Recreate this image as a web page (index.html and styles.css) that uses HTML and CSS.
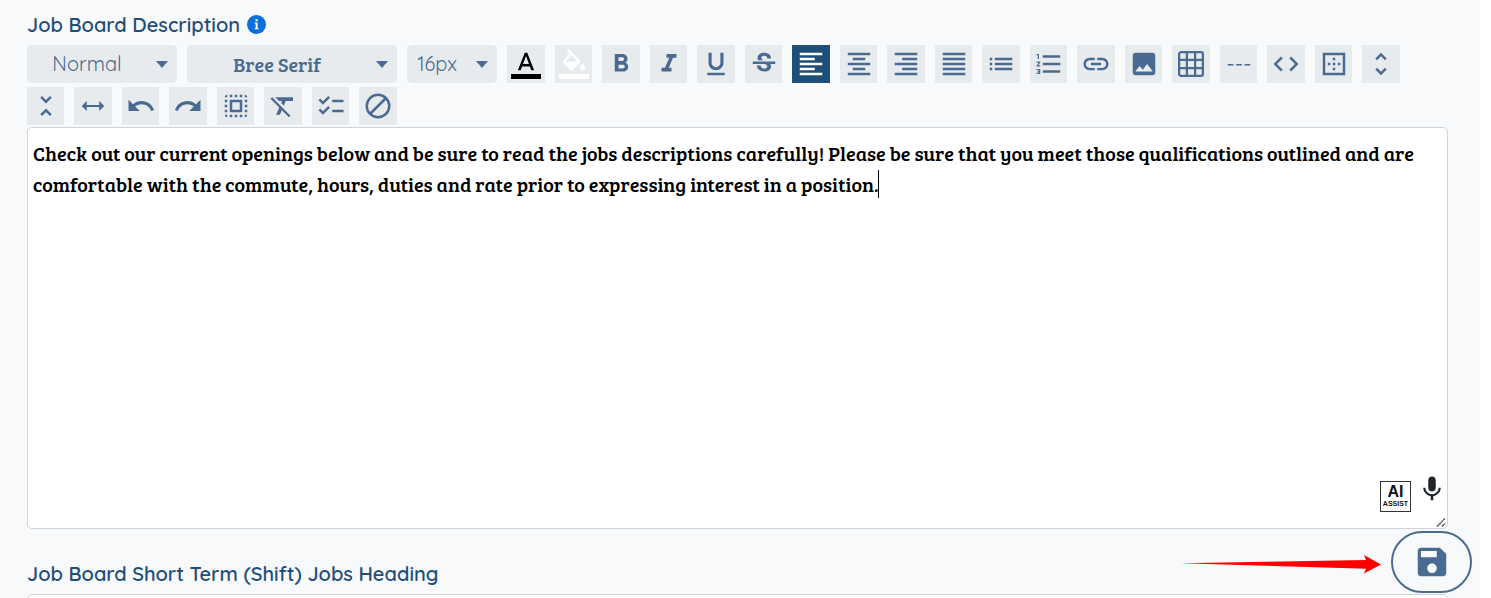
FILE: index.html
```html
<!DOCTYPE html>
<html lang="en">
<head>
  <meta charset="UTF-8">
  <meta name="viewport" content="width=device-width, initial-scale=1.0">
  <title>Job Board Settings</title>
  <link rel="stylesheet" href="styles.css">
</head>
<body>
  <main class="panel">
    <div class="field-label" id="description-label">
      Job Board Description
      <svg viewBox="0 0 20 20" class="info-icon" aria-hidden="true">
        <circle cx="10" cy="10" r="10" fill="#0b6fdc"/>
        <path d="M9 4.5h2.2v2.2H9zM8.2 8h3v5.8h.9V15H8.2v-1.2h.9V9.3h-.9z" fill="#fff"/>
      </svg>
    </div>

    <!-- Toolbar -->
    <div class="toolbar" role="toolbar" aria-label="Text formatting">
      <span class="picker picker-format">
        <select aria-label="Paragraph format"><option>Normal</option><option>Heading 1</option><option>Heading 2</option></select>
      </span>
      <span class="picker picker-font">
        <select aria-label="Font"><option>Bree Serif</option><option>Quicksand</option></select>
      </span>
      <span class="picker picker-size">
        <select aria-label="Font size"><option>16px</option><option>18px</option><option>20px</option></select>
      </span>
      <button type="button" class="tool tool-color" aria-label="Text color"><svg viewBox="0 0 24 24"><path d="M11 3 5.5 17h2.25l1.12-3h6.25l1.12 3h2.25L13 3zm-1.38 9L12 5.67 14.38 12zM0 20h24v4H0z"/></svg></button>
      <button type="button" class="tool tool-fill" aria-label="Background color"><svg viewBox="0 0 24 24"><path d="M16.56 8.94 7.62 0 6.21 1.41l2.38 2.38-5.15 5.15a1.49 1.49 0 0 0 0 2.12l5.5 5.5c.29.29.68.44 1.06.44s.77-.15 1.06-.44l5.5-5.5c.59-.58.59-1.53 0-2.12zM5.21 10 10 5.21 14.79 10zM19 11.5s-2 2.17-2 3.5c0 1.1.9 2 2 2s2-.9 2-2c0-1.33-2-3.5-2-3.5zM0 20h24v4H0z"/></svg></button>
      <button type="button" class="tool" aria-label="Bold"><svg viewBox="0 0 24 24"><path d="M15.6 10.79c.97-.67 1.65-1.77 1.65-2.79 0-2.26-1.75-4-4-4H7v14h7.04c2.09 0 3.71-1.7 3.71-3.79 0-1.52-.86-2.82-2.15-3.42zM10 6.5h3c.83 0 1.5.67 1.5 1.5s-.67 1.5-1.5 1.5h-3zm3.5 9H10v-3h3.5c.83 0 1.5.67 1.5 1.5s-.67 1.5-1.5 1.5z"/></svg></button>
      <button type="button" class="tool" aria-label="Italic"><svg viewBox="0 0 24 24"><path d="M10 4v3h2.21l-3.42 8H6v3h8v-3h-2.21l3.42-8H18V4z"/></svg></button>
      <button type="button" class="tool" aria-label="Underline"><svg viewBox="0 0 24 24"><path d="M12 17c3.31 0 6-2.69 6-6V3h-2.5v8c0 1.93-1.57 3.5-3.5 3.5S8.5 12.93 8.5 11V3H6v8c0 3.31 2.69 6 6 6zm-7 2v2h14v-2z"/></svg></button>
      <button type="button" class="tool" aria-label="Strikethrough"><svg viewBox="0 0 24 24"><path d="M7.24 8.75c-.26-.48-.39-1.03-.39-1.67 0-.61.13-1.16.4-1.67.26-.5.63-.93 1.11-1.29a5.73 5.73 0 0 1 1.7-.83c.66-.19 1.39-.29 2.18-.29.81 0 1.54.11 2.21.34.66.22 1.23.54 1.69.94.47.4.83.88 1.08 1.43s.38 1.15.38 1.81h-3.01c0-.31-.05-.59-.15-.85-.09-.27-.24-.49-.44-.68-.2-.19-.45-.33-.75-.44-.3-.1-.66-.16-1.06-.16-.39 0-.74.04-1.03.13s-.53.21-.72.36c-.19.16-.34.34-.44.55-.1.21-.15.43-.15.66 0 .48.25.88.74 1.21.38.25.77.48 1.41.7H7.39c-.05-.08-.11-.17-.15-.25zM21 12v-2H3v2h9.62c.18.07.4.14.55.2.37.17.66.34.87.51s.35.36.43.57c.07.2.11.43.11.69 0 .23-.05.45-.14.66-.09.2-.23.38-.42.53-.19.15-.42.26-.71.35-.29.08-.63.13-1.01.13-.43 0-.83-.04-1.18-.13s-.66-.23-.91-.42c-.25-.19-.45-.44-.59-.75s-.25-.76-.25-1.21H6.4c0 .55.08 1.13.24 1.58s.37.85.65 1.21c.28.35.6.66.98.92.37.26.78.48 1.22.65.44.17.9.3 1.38.39.48.08.96.13 1.44.13.8 0 1.53-.09 2.18-.28s1.21-.45 1.67-.79c.46-.34.82-.77 1.07-1.27s.38-1.07.38-1.71c0-.6-.1-1.14-.31-1.61-.05-.11-.11-.23-.17-.33H21z"/></svg></button>
      <button type="button" class="tool active" aria-label="Align left" aria-pressed="true"><svg viewBox="0 0 24 24"><path d="M3 3h18v2H3zM3 7h12v2H3zM3 11h18v2H3zM3 15h12v2H3zM3 19h18v2H3z"/></svg></button>
      <button type="button" class="tool" aria-label="Align center"><svg viewBox="0 0 24 24"><path d="M3 3h18v2H3zM7 7h10v2H7zM3 11h18v2H3zM7 15h10v2H7zM3 19h18v2H3z"/></svg></button>
      <button type="button" class="tool" aria-label="Align right"><svg viewBox="0 0 24 24"><path d="M3 3h18v2H3zM9 7h12v2H9zM3 11h18v2H3zM9 15h12v2H9zM3 19h18v2H3z"/></svg></button>
      <button type="button" class="tool" aria-label="Justify"><svg viewBox="0 0 24 24"><path d="M3 3h18v2H3zM3 7h18v2H3zM3 11h18v2H3zM3 15h18v2H3zM3 19h18v2H3z"/></svg></button>
      <button type="button" class="tool" aria-label="Bulleted list"><svg viewBox="0 0 24 24"><path d="M3 13h2v-2H3zm0 4h2v-2H3zm0-8h2V7H3zm4 4h14v-2H7zm0 4h14v-2H7zM7 7v2h14V7z"/></svg></button>
      <button type="button" class="tool" aria-label="Numbered list"><svg viewBox="0 0 24 24"><path d="M2 17h2v.5H3v1h1v.5H2v1h3v-4H2zm1-9h1V4H2v1h1zm-1 3h1.8L2 13.1v.9h3v-1H3.2L5 10.9V10H2zm5-6v2h14V5zm0 14h14v-2H7zm0-6h14v-2H7z"/></svg></button>
      <button type="button" class="tool" aria-label="Insert link"><svg viewBox="0 0 24 24"><path d="M3.9 12c0-1.71 1.39-3.1 3.1-3.1h4V7H7c-2.76 0-5 2.24-5 5s2.24 5 5 5h4v-1.9H7c-1.71 0-3.1-1.39-3.1-3.1zM8 13h8v-2H8zm9-6h-4v1.9h4c1.71 0 3.1 1.39 3.1 3.1s-1.39 3.1-3.1 3.1h-4V17h4c2.76 0 5-2.24 5-5s-2.24-5-5-5z"/></svg></button>
      <button type="button" class="tool" aria-label="Insert image"><svg viewBox="0 0 24 24"><path d="M21 19V5c0-1.1-.9-2-2-2H5c-1.1 0-2 .9-2 2v14c0 1.1.9 2 2 2h14c1.1 0 2-.9 2-2zM8.5 13.5l2.5 3.01L14.5 12l4.5 6H5z"/></svg></button>
      <button type="button" class="tool" aria-label="Insert table"><svg viewBox="0 0 24 24"><path d="M4 2.5h16a1.5 1.5 0 0 1 1.5 1.5v16a1.5 1.5 0 0 1-1.5 1.5H4A1.5 1.5 0 0 1 2.5 20V4A1.5 1.5 0 0 1 4 2.5zM2.5 8.7h19M2.5 15.3h19M8.7 2.5v19M15.3 2.5v19" fill="none" stroke="currentColor" stroke-width="1.8"/></svg></button>
      <button type="button" class="tool" aria-label="Horizontal line"><svg viewBox="0 0 24 24"><path d="M3 12.5h4.6M9.7 12.5h4.6M16.4 12.5H21" fill="none" stroke="currentColor" stroke-width="1.2"/></svg></button>
      <button type="button" class="tool" aria-label="Source code"><svg viewBox="0 0 24 24"><path d="M9.4 16.6 4.8 12l4.6-4.6L8 6l-6 6 6 6zm5.2 0 4.6-4.6-4.6-4.6L16 6l6 6-6 6z"/></svg></button>
      <button type="button" class="tool" aria-label="Show borders"><svg viewBox="0 0 24 24"><path d="M13 7h-2v2h2zm0 4h-2v2h2zm4 0h-2v2h2zM3 3v18h18V3zm16 16H5V5h14zm-6-4h-2v2h2zm-4-4H7v2h2z"/></svg></button>
      <button type="button" class="tool" aria-label="Increase height"><svg viewBox="0 0 24 24"><path d="M12 5.83 15.17 9l1.41-1.41L12 3 7.41 7.59 8.83 9zm0 12.34L8.83 15l-1.41 1.41L12 21l4.59-4.59L15.17 15z"/></svg></button>
      <button type="button" class="tool" aria-label="Decrease height"><svg viewBox="0 0 24 24"><path d="M7.41 18.59 8.83 20 12 16.83 15.17 20l1.41-1.41L12 14zm9.18-13.18L15.17 4 12 7.17 8.83 4 7.41 5.41 12 10z"/></svg></button>
      <button type="button" class="tool" aria-label="Full width"><svg viewBox="0 0 24 24"><path d="m7 8-4 4 4 4v-3.2h10V16l4-4-4-4v3.2H7z"/></svg></button>
      <button type="button" class="tool" aria-label="Undo"><svg viewBox="0 0 24 24"><path d="M12.5 8c-2.65 0-5.05.99-6.9 2.6L2 7v9h9l-3.62-3.62c1.39-1.16 3.16-1.88 5.12-1.88 3.54 0 6.55 2.31 7.6 5.5l2.37-.78C21.08 11.03 17.15 8 12.5 8z"/></svg></button>
      <button type="button" class="tool" aria-label="Redo"><svg viewBox="0 0 24 24"><path d="M18.4 10.6C16.55 8.99 14.15 8 11.5 8c-4.65 0-8.58 3.03-9.96 7.22L3.9 16c1.05-3.19 4.05-5.5 7.6-5.5 1.95 0 3.73.72 5.12 1.88L13 16h9V7z"/></svg></button>
      <button type="button" class="tool" aria-label="Select all"><svg viewBox="0 0 24 24"><path d="M3 5h2V3c-1.1 0-2 .9-2 2zm0 8h2v-2H3zm4 8h2v-2H7zM3 9h2V7H3zm10-6h-2v2h2zm6 0v2h2c0-1.1-.9-2-2-2zM5 21v-2H3c0 1.1.9 2 2 2zm-2-4h2v-2H3zM9 3H7v2h2zm2 18h2v-2h-2zm8-8h2v-2h-2zm0 8c1.1 0 2-.9 2-2h-2zm0-12h2V7h-2zm0 8h2v-2h-2zm-4 4h2v-2h-2zm0-16h2V3h-2zM7 17h10V7H7zm2-8h6v6H9z"/></svg></button>
      <button type="button" class="tool" aria-label="Clear formatting"><svg viewBox="0 0 24 24"><path d="M3.27 5 2 6.27l6.97 6.97L6.5 19h3l1.57-3.66L16.73 21 18 19.73 3.55 5.27zM6 5v.18L8.82 8h2.4l-.72 1.68 2.1 2.1L14.21 8H20V5z"/></svg></button>
      <button type="button" class="tool" aria-label="Checklist"><svg viewBox="0 0 24 24"><path d="M22 7h-9v2h9zm0 8h-9v2h9zM5.54 11 2 7.46l1.41-1.41 2.12 2.12 4.24-4.24 1.41 1.41zm0 8L2 15.46l1.41-1.41 2.12 2.12 4.24-4.24 1.41 1.41z"/></svg></button>
      <button type="button" class="tool" aria-label="Clear all"><svg viewBox="0 0 24 24"><circle cx="12" cy="12" r="9" fill="none" stroke="currentColor" stroke-width="2"/><path d="M5.6 18.4 18.4 5.6" stroke="currentColor" stroke-width="2"/></svg></button>
    </div>

    <!-- Editor -->
    <div class="editor">
      <div class="editor-text" contenteditable="true" role="textbox" aria-multiline="true" aria-labelledby="description-label" spellcheck="false">Check out our current openings below and be sure to read the jobs descriptions carefully! Please be sure that you meet those qualifications outlined and are comfortable with the commute, hours, duties and rate prior to expressing interest in a position.<span class="caret"></span></div>
      <div class="editor-actions">
        <button type="button" class="ai-assist"><b>AI</b><small>ASSIST</small></button>
        <button type="button" class="mic" aria-label="Dictate"><svg viewBox="0 0 24 24"><path d="M12 14c1.66 0 3-1.34 3-3V5c0-1.66-1.34-3-3-3S9 3.34 9 5v6c0 1.66 1.34 3 3 3zm5.3-3c0 3-2.54 5.1-5.3 5.1S6.7 14 6.7 11H5c0 3.41 2.72 6.23 6 6.72V21h2v-3.28c3.28-.48 6-3.3 6-6.72z"/></svg></button>
      </div>
      <svg viewBox="0 0 10 10" class="grip" aria-hidden="true"><path d="M1 9.5 9 1.5M6 9.5 9 6.5" stroke="#444" stroke-width="1.3" stroke-dasharray="2.5 .4"/></svg>
    </div>

    <label class="field-label" for="short-term-heading">Job Board Short Term (Shift) Jobs Heading</label>
    <input type="text" id="short-term-heading" class="text-input">
  </main>

  <div class="save-bar">
    <svg viewBox="0 0 200 20" class="pointer" aria-hidden="true"><path d="M0 9.2 185 6 183 1l17 9.5L183 19.5l2-4.7z" fill="#f00"/></svg>
    <button type="button" class="save-button" aria-label="Save"><svg viewBox="0 0 24 24"><path d="M17 3H5c-1.11 0-2 .9-2 2v14c0 1.1.89 2 2 2h14c1.1 0 2-.9 2-2V7zm-5 16c-1.66 0-3-1.34-3-3s1.34-3 3-3 3 1.34 3 3-1.34 3-3 3zm3-10H5V5h10z"/></svg></button>
  </div>
</body>
</html>
```
FILE: styles.css
```css
:root {
  --page-bg: #f8f9fb;
  --tool-bg: #e8ebee;
  --tool-color: #4a6b91;
  --heading-color: #1f4e79;
  --border-color: #ced4da;
}

* {
  margin: 0;
  padding: 0;
  box-sizing: border-box;
}

body {
  font-family: Quicksand, Inter, sans-serif;
  font-size: 20px;
  background-color: #fff;
  overflow: hidden;
}

button {
  border: none;
  cursor: pointer;
}

svg {
  display: block;
  fill: currentColor;
}

.panel {
  min-height: 100vh;
  margin-right: 11px;
  padding: 9px 32px 0 27px;
  background-color: var(--page-bg);
}

.field-label {
  display: flex;
  align-items: center;
  gap: 7px;
  height: 30px;
  color: var(--heading-color);
  font-weight: 600;
}

.info-icon {
  width: 19px;
  height: 19px;
}

/* Toolbar */
.toolbar {
  display: flex;
  flex-wrap: wrap;
  row-gap: 4px;
  margin: 6px 0 2px;
}

.picker {
  position: relative;
  height: 38px;
  margin-right: 10px;
}

.picker select {
  width: 100%;
  height: 100%;
  padding: 0 30px 2px 0;
  border: none;
  border-radius: 5px;
  background-color: var(--tool-bg);
  color: var(--tool-color);
  font-family: inherit;
  font-size: 20px;
  font-weight: 400;
  text-align-last: center;
  appearance: none;
}

.picker::after {
  content: "";
  position: absolute;
  top: 16px;
  right: 9px;
  border: 6px solid transparent;
  border-top: 7px solid var(--tool-color);
  border-bottom: none;
  pointer-events: none;
}

.picker-format {
  width: 150px;
}

.picker-font {
  width: 210px;
}

.picker-size {
  width: 90px;
}

.picker-font select {
  padding-bottom: 0;
  font-family: "Bree Serif", "Liberation Serif", serif;
}

.tool {
  display: flex;
  align-items: center;
  justify-content: center;
  width: 38px;
  height: 38px;
  margin-right: 10px;
  background-color: var(--tool-bg);
  color: var(--tool-color);
}

.tool:nth-child(odd) {
  width: 37px;
}

.tool svg {
  flex: none;
  width: 30px;
  height: 30px;
}

.tool.active {
  background-color: var(--heading-color);
  color: #fff;
}

.tool-color {
  color: #000;
}

.tool-fill {
  color: #fff;
}

/* Editor */
.editor {
  position: relative;
  margin-bottom: 29px;
  border: 1px solid var(--border-color);
  border-radius: 5px;
  background-color: #fff;
}

.editor-text {
  min-height: 400px;
  padding: 10px 5px;
  font-family: "Bree Serif", "Liberation Serif", serif;
  font-size: 20px;
  font-weight: 400;
  line-height: 31px;
  color: #000;
  outline: none;
}

.caret {
  display: inline-block;
  width: 1px;
  height: 28px;
  margin: -5px 0 1px;
  background-color: #000;
  vertical-align: middle;
}

.editor-actions {
  position: absolute;
  right: 0;
  bottom: 16px;
  display: flex;
  gap: 6px;
}

.ai-assist {
  display: flex;
  flex-direction: column;
  align-items: center;
  justify-content: center;
  width: 31px;
  height: 31px;
  margin-top: 7px;
  border: 1px solid #333;
  background-color: #fff;
  color: #111;
  font-family: "Liberation Sans", sans-serif;
}

.ai-assist b {
  font-size: 16px;
  line-height: 14px;
}

.ai-assist small {
  font-size: 7px;
  font-weight: 700;
  line-height: 9px;
}

.mic {
  width: 30px;
  height: 30px;
  background: none;
  color: #212529;
}

.grip {
  position: absolute;
  right: 1px;
  bottom: 1px;
  width: 10px;
  height: 10px;
}

.text-input {
  display: block;
  width: 100%;
  height: 40px;
  margin-top: 6px;
  padding: 0 12px;
  border: 1px solid var(--border-color);
  border-radius: 5px;
  background-color: #fff;
  font: inherit;
}

/* Floating save button */
.save-bar {
  position: fixed;
  right: 19px;
  bottom: 5px;
  display: flex;
  align-items: center;
  gap: 10px;
}

.pointer {
  width: 200px;
  height: 20px;
  margin-top: 4px;
}

.save-button {
  display: flex;
  align-items: center;
  justify-content: center;
  width: 81px;
  height: 62px;
  border: 2px solid var(--tool-color);
  border-radius: 31px;
  background-color: var(--page-bg);
  color: var(--tool-color);
}

.save-button svg {
  width: 38px;
  height: 38px;
}
```
